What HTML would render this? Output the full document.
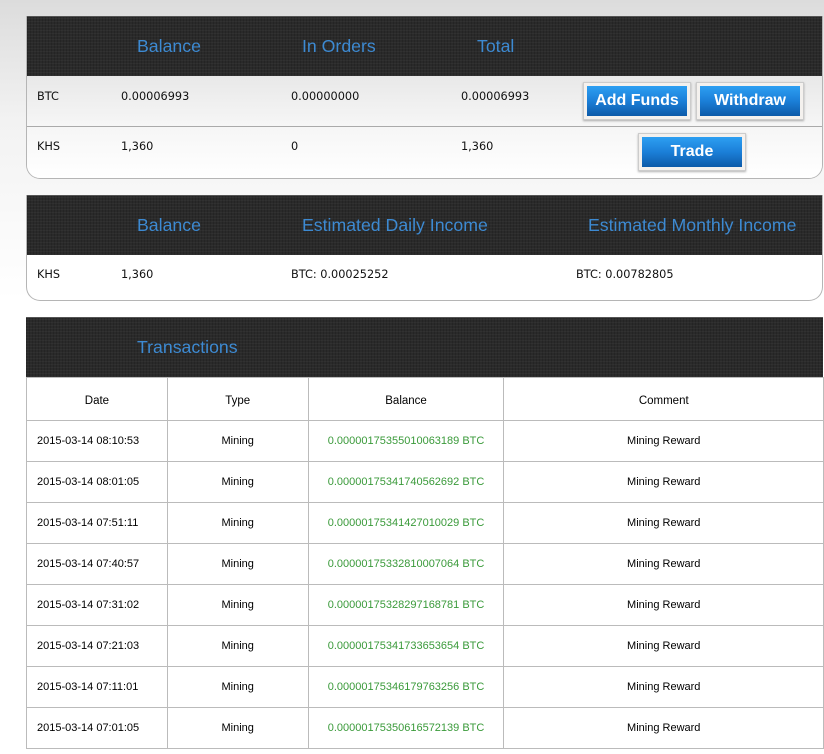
<!DOCTYPE html>
<html><head><meta charset="utf-8"><style>
*{margin:0;padding:0;box-sizing:border-box}
html,body{width:824px;height:754px;overflow:hidden}
body{background:linear-gradient(#dcdcdc 0px,#f2f2f2 120px,#fff 300px);font-family:"DejaVu Sans","Liberation Sans",sans-serif;position:relative;color:#111}
.p{position:absolute;left:26px;width:797px;border:1px solid #b5b5b5;border-radius:0 0 14px 14px;border-top:none;overflow:hidden}
.hd{background-color:#2a2a2a;background-image:repeating-linear-gradient(0deg,rgba(255,255,255,.03) 0 1px,transparent 1px 3px),repeating-linear-gradient(90deg,rgba(0,0,0,.15) 0 1px,transparent 1px 3px);height:60px;position:relative;border-top:1px solid #555}
.ht{position:absolute;top:19px;color:#3d8ad2;font:17.7px "Liberation Sans",Arial,sans-serif}
.t{position:absolute;font-size:11.3px;color:#111}
.row{position:relative;height:51px}
.btn{position:absolute;width:108px;height:38px;border:1px solid #ccc;background:#f4f1ee;box-shadow:0 1px 2px rgba(0,0,0,.3);padding:3px}
.btn div{height:100%;background:linear-gradient(#2d9ff2,#1b7fd8 50%,#0d5aa8);color:#fff;font:bold 16px "Liberation Sans",Arial,sans-serif;text-align:center;line-height:30px}
table{border-collapse:collapse;position:absolute;left:26px;top:377px;font-family:"Liberation Sans","DejaVu Sans",sans-serif;font-size:11px;color:#000}
td{border:1px solid #bbb;height:41px;text-align:center;padding-top:0}
tr:first-child td{height:43px;font-size:11.5px;padding-top:4px}
td.d{text-align:left;padding-left:10px}
td.g{color:#3a9a3a}
</style></head><body>

<div class="p" style="top:16px;height:163px">
 <div class="hd">
  <span class="ht" style="left:110px">Balance</span>
  <span class="ht" style="left:275px">In Orders</span>
  <span class="ht" style="left:450px">Total</span>
 </div>
 <div class="row" style="background:linear-gradient(#e8e8e8,#f6f6f6);border-bottom:1px solid #aaa">
  <span class="t" style="left:10px;top:14px">BTC</span>
  <span class="t" style="left:94px;top:14px">0.00006993</span>
  <span class="t" style="left:264px;top:14px">0.00000000</span>
  <span class="t" style="left:434px;top:14px">0.00006993</span>
  <div class="btn" style="left:556px;top:6px"><div>Add Funds</div></div>
  <div class="btn" style="left:669px;top:6px"><div>Withdraw</div></div>
 </div>
 <div class="row" style="background:linear-gradient(#f6f6f6,#fff)">
  <span class="t" style="left:10px;top:13px">KHS</span>
  <span class="t" style="left:94px;top:13px">1,360</span>
  <span class="t" style="left:264px;top:13px">0</span>
  <span class="t" style="left:434px;top:13px">1,360</span>
  <div class="btn" style="left:611px;top:6px"><div>Trade</div></div>
 </div>
</div>

<div class="p" style="top:195px;height:106px;background:#fff">
 <div class="hd">
  <span class="ht" style="left:110px">Balance</span>
  <span class="ht" style="left:275px">Estimated Daily Income</span>
  <span class="ht" style="left:561px">Estimated Monthly Income</span>
 </div>
 <span class="t" style="left:10px;top:73px">KHS</span>
 <span class="t" style="left:94px;top:73px">1,360</span>
 <span class="t" style="left:264px;top:73px">BTC: 0.00025252</span>
 <span class="t" style="left:549px;top:73px">BTC: 0.00782805</span>
</div>

<div class="p" style="top:317px;height:60px;border:none;border-radius:0">
 <div class="hd"><span class="ht" style="left:111px">Transactions</span></div>
</div>

<table>
<colgroup><col style="width:141px"><col style="width:141px"><col style="width:196px"><col style="width:320px"></colgroup>
<tr><td>Date</td><td>Type</td><td>Balance</td><td>Comment</td></tr>
<tr><td class="d">2015-03-14 08:10:53</td><td>Mining</td><td class="g">0.00000175355010063189 BTC</td><td>Mining Reward</td></tr>
<tr><td class="d">2015-03-14 08:01:05</td><td>Mining</td><td class="g">0.00000175341740562692 BTC</td><td>Mining Reward</td></tr>
<tr><td class="d">2015-03-14 07:51:11</td><td>Mining</td><td class="g">0.00000175341427010029 BTC</td><td>Mining Reward</td></tr>
<tr><td class="d">2015-03-14 07:40:57</td><td>Mining</td><td class="g">0.00000175332810007064 BTC</td><td>Mining Reward</td></tr>
<tr><td class="d">2015-03-14 07:31:02</td><td>Mining</td><td class="g">0.00000175328297168781 BTC</td><td>Mining Reward</td></tr>
<tr><td class="d">2015-03-14 07:21:03</td><td>Mining</td><td class="g">0.00000175341733653654 BTC</td><td>Mining Reward</td></tr>
<tr><td class="d">2015-03-14 07:11:01</td><td>Mining</td><td class="g">0.00000175346179763256 BTC</td><td>Mining Reward</td></tr>
<tr><td class="d">2015-03-14 07:01:05</td><td>Mining</td><td class="g">0.00000175350616572139 BTC</td><td>Mining Reward</td></tr>
</table>
</body></html>
